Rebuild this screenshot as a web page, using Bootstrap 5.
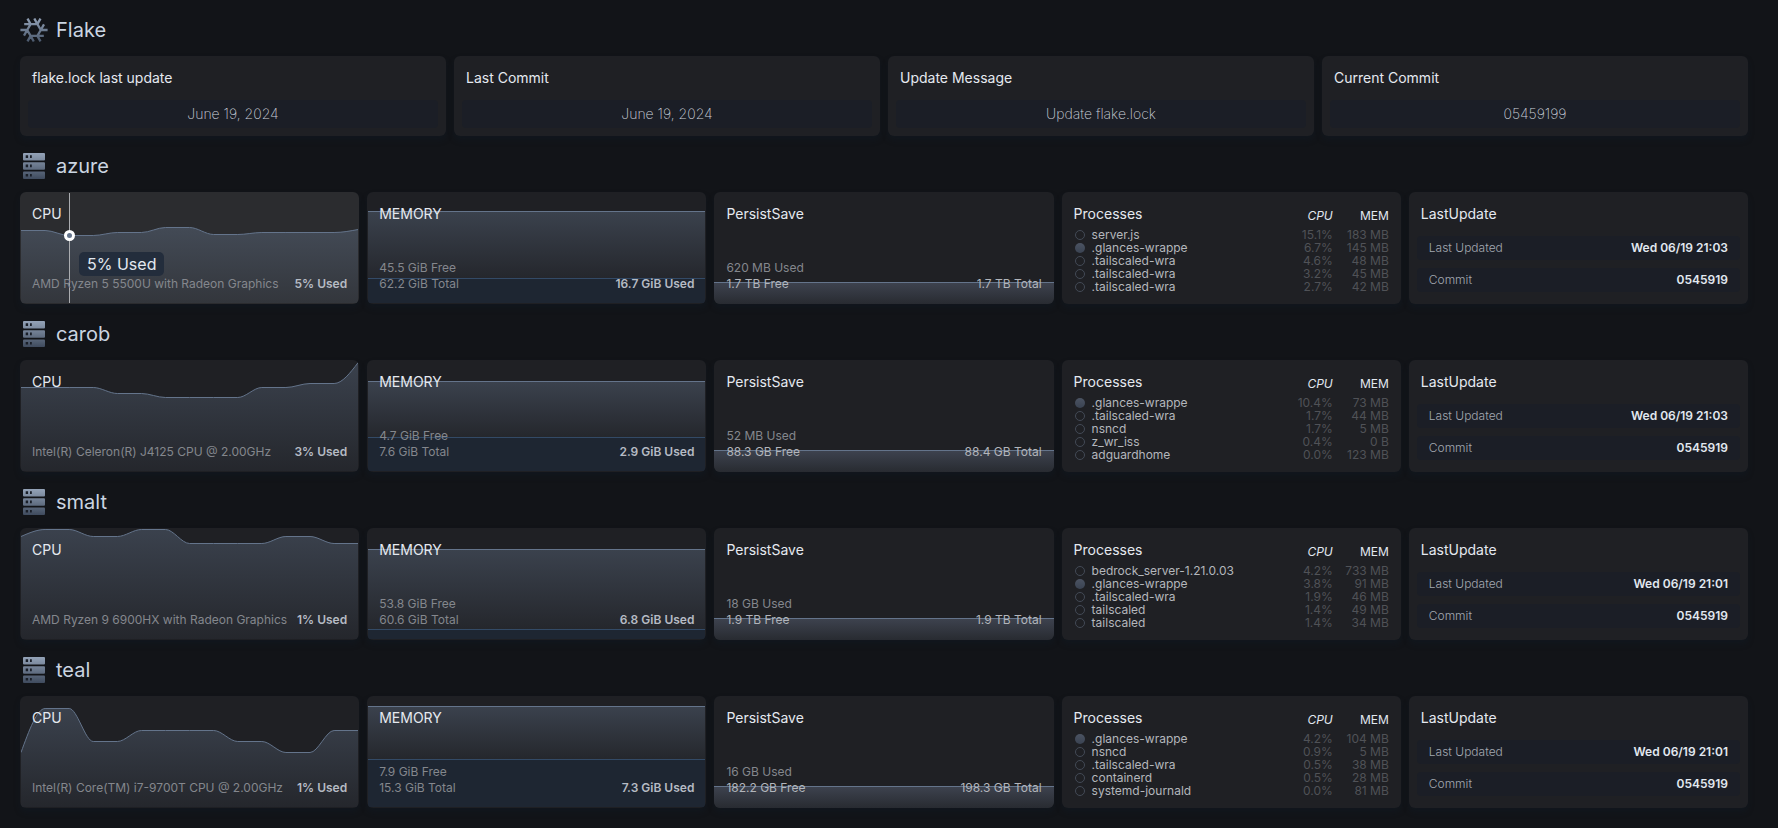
<!DOCTYPE html>
<html lang="en">
<head>
<meta charset="utf-8">
<meta name="viewport" content="width=device-width, initial-scale=1">
<title>Homelab</title>
<link href="https://cdn.jsdelivr.net/npm/bootstrap@5.3.0/dist/css/bootstrap.min.css" rel="stylesheet">
<style>
body{background:#121418;color:#e2e8f0;font-family:Inter,"Noto Sans",sans-serif;font-size:12px;line-height:16px}
.page{padding:0 30px 20px 20px}
.group-head{height:56px;padding-top:4px;gap:8px}
.group-head h2{font-size:20px;line-height:28px;font-weight:400;color:#cbd5e1}
.group-head svg{width:28px;height:28px}
.tiles{display:grid;gap:8px;grid-template-columns:repeat(auto-fit,minmax(300px,1fr))}
.tile{position:relative;background:#1f2024;border-radius:6px;overflow:hidden;box-shadow:0 4px 6px rgba(15,30,42,.3);min-width:0}
.tiles-host .tile{height:112px}
.tile h3{font-size:14px;line-height:20px;font-weight:400;margin:0;color:#e5e9f0}
.metric{display:flex;flex-direction:column;padding:12px}
.metric>*{position:relative}
.metric .chart{position:absolute;inset:1px;width:calc(100% - 2px);height:calc(100% - 2px)}
.chart path{vector-effect:non-scaling-stroke}
.chart .edge{fill:none;stroke:#64748b;stroke-width:1}
.chart .edge-used{fill:none;stroke:#334a66;stroke-width:1}
.metric .fill{position:absolute;left:0;right:0;bottom:0;background:linear-gradient(#3d424e,#282b31);border-top:1px solid #64748b}
.muted{color:#84878d}
.strong{color:#b6bbc4;font-weight:600}
.soft{color:#b2b5bb}
.hovered{background:#2b2c2f}
.probe{position:absolute!important;top:1px;bottom:1px;width:1px;background:#aaacb0}
.probe i{position:absolute;top:37px;left:-5px;width:11px;height:11px;border:3px solid #fff;border-radius:50%;background:#64748b}
.tip{position:absolute!important;z-index:2;top:60px;padding:0 8px;border-radius:5px;background:#232d3c;font-size:16px;line-height:24px;color:#e2e8f0}
.pill{background:#1b1e26;border-radius:4px;margin:0 8px}
.info{padding:12px 0 8px}
.info h3{padding:0 12px;margin-bottom:12px}
.pill-center{height:28px;line-height:28px;font-size:14px;font-weight:200;text-align:center;color:#cbd1da}
.pill-row{height:24px;line-height:24px;padding:0 12px;margin-bottom:8px}
.pill-row dt{font-weight:300;color:#a3a8b1}
.pill-row dd{font-weight:600;margin:0;color:#e2e8f0}
.procs{padding:12px}
.procs table{width:100%;border-collapse:collapse}
.procs thead tr{height:24px}
.procs th{font-weight:400;padding:0;vertical-align:top}
.procs thead th{line-height:23px;color:#e2e8f0;text-align:right}
.procs thead th:first-child{font-size:14px;line-height:20px;text-align:left;color:#e5e9f0}
.procs tbody th,.procs td{line-height:13px;height:13px;padding:0}
.procs tbody th{color:#b4b7bc}
.procs tbody th::before{content:"";display:inline-block;width:10px;height:10px;margin:0 7px 0 1px;border:1px solid #434a56;border-radius:50%;vertical-align:-1px}
.procs tbody th.run::before{border:0;background:linear-gradient(#4b5362,#3a4352)}
.procs td{width:56px;text-align:right;color:#505257}
.procs td:nth-child(2){width:72px}
</style>
</head>
<body>
<svg width="0" height="0" class="position-absolute" aria-hidden="true">
<defs>
<linearGradient id="slate" gradientUnits="userSpaceOnUse" x1="0" y1="1" x2="0" y2="27"><stop stop-color="#94a3b8"/><stop offset="1" stop-color="#3f4b5e"/></linearGradient>
<linearGradient id="flakeFill" gradientUnits="userSpaceOnUse" x1="0" y1="1" x2="0" y2="27"><stop stop-color="#94a3b8"/><stop offset="1" stop-color="#475569"/></linearGradient>
<linearGradient id="area" x2="0" y2="1"><stop stop-color="#64748b" stop-opacity=".4"/><stop offset="1" stop-color="#64748b" stop-opacity=".08"/></linearGradient>
<linearGradient id="areaHot" x2="0" y2="1"><stop stop-color="#64748b" stop-opacity=".42"/><stop offset="1" stop-color="#64748b" stop-opacity=".14"/></linearGradient>
<symbol id="server" viewBox="0 0 28 28">
<g fill="url(#slate)"><rect x="3" y="1" width="22" height="7.4" rx="1"/><rect x="3" y="10.3" width="22" height="7.4" rx="1"/><rect x="3" y="19.6" width="22" height="7.4" rx="1"/></g>
<path fill="#1a1f28" d="M5.7 3.3h2.4v2.6H5.7zM10 3.3h1.8v2.6H10zM5.7 12.6h2.4v2.6H5.7zM10 12.6h1.8v2.6H10zM5.7 21.9h2.4v2.6H5.7zM10 21.9h1.8v2.6H10z"/>
</symbol>
<symbol id="nix" viewBox="0 0 28 28">
<path fill="none" stroke="url(#flakeFill)" stroke-width="2.3" d="M10.6 8.1H17.4L20.8 14 17.4 19.9H10.6L7.2 14ZM17.4 8.1 20.5 2.6M17.4 8.1 14.3 2.5M20.8 14H27.6M20.8 14 24 8.4M17.4 19.9 20.5 25.4M17.4 19.9H23.8M10.6 19.9 7.5 25.4M10.6 19.9 13.8 25.5M7.2 14H.4M7.2 14 4 19.6M10.6 8.1 7.5 2.6M10.6 8.1H4.2"/>
</symbol>
</defs></svg>

<main class="container-fluid page">

<section>
<header class="group-head d-flex align-items-center"><svg aria-hidden="true"><use href="#nix"/></svg><h2 class="m-0">Flake</h2></header>
<div class="tiles">
<article class="tile info"><h3>flake.lock last update</h3><div class="pill pill-center">June 19, 2024</div></article>
<article class="tile info"><h3>Last Commit</h3><div class="pill pill-center">June 19, 2024</div></article>
<article class="tile info"><h3>Update Message</h3><div class="pill pill-center">Update flake.lock</div></article>
<article class="tile info"><h3>Current Commit</h3><div class="pill pill-center">05459199</div></article>
</div>
</section>

<section>
<header class="group-head d-flex align-items-center"><svg aria-hidden="true"><use href="#server"/></svg><h2 class="m-0">azure</h2></header>
<div class="tiles tiles-host">
<article class="tile metric hovered">
<svg class="chart" viewBox="0 0 336 110" preserveAspectRatio="none" data-fill="areaHot" data-points="37,37,42,42,39,39,34,34,41,41,39,39,39,39,36"></svg>
<div class="probe" style="left:14.4%"><i></i></div>
<h3>CPU</h3>
<div class="mt-auto d-flex justify-content-between"><span class="muted">AMD Ryzen 5 5500U with Radeon Graphics</span><span class="strong">5% Used</span></div>
<div class="tip" style="left:17.4%">5% Used</div>
</article>
<article class="tile metric">
<svg class="chart" viewBox="0 0 336 110" preserveAspectRatio="none" data-free="18" data-used="85"></svg>
<h3>MEMORY</h3>
<div class="mt-auto muted">45.5 GiB Free</div>
<div class="d-flex justify-content-between"><span class="muted">62.2 GiB Total</span><span class="strong">16.7 GiB Used</span></div>
</article>
<article class="tile metric">
<div class="fill" style="height:20%"></div>
<h3>PersistSave</h3>
<div class="mt-auto muted">620 MB Used</div>
<div class="d-flex justify-content-between soft"><span>1.7 TB Free</span><span>1.7 TB Total</span></div>
</article>
<article class="tile procs"><table>
<thead><tr><th scope="col">Processes</th><th scope="col"><em>CPU</em></th><th scope="col">MEM</th></tr></thead>
<tbody>
<tr><th scope="row">server.js</th><td>15.1%</td><td>183 MB</td></tr>
<tr><th scope="row" class="run">.glances-wrappe</th><td>6.7%</td><td>145 MB</td></tr>
<tr><th scope="row">.tailscaled-wra</th><td>4.6%</td><td>48 MB</td></tr>
<tr><th scope="row">.tailscaled-wra</th><td>3.2%</td><td>45 MB</td></tr>
<tr><th scope="row">.tailscaled-wra</th><td>2.7%</td><td>42 MB</td></tr>
</tbody></table></article>
<article class="tile info"><h3>LastUpdate</h3>
<dl class="m-0">
<div class="pill pill-row d-flex justify-content-between"><dt>Last Updated</dt><dd>Wed 06/19 21:03</dd></div>
<div class="pill pill-row d-flex justify-content-between"><dt>Commit</dt><dd>0545919</dd></div>
</dl></article>
</div>
</section>

<section>
<header class="group-head d-flex align-items-center"><svg aria-hidden="true"><use href="#server"/></svg><h2 class="m-0">carob</h2></header>
<div class="tiles tiles-host">
<article class="tile metric">
<svg class="chart" viewBox="0 0 336 110" preserveAspectRatio="none" data-fill="area" data-points="26,26,26,26,32,32,36,36,36,36,26,26,22,22,1"></svg>
<h3>CPU</h3>
<div class="mt-auto d-flex justify-content-between"><span class="muted">Intel(R) Celeron(R) J4125 CPU @ 2.00GHz</span><span class="strong">3% Used</span></div>
</article>
<article class="tile metric">
<svg class="chart" viewBox="0 0 336 110" preserveAspectRatio="none" data-free="20" data-used="76"></svg>
<h3>MEMORY</h3>
<div class="mt-auto muted">4.7 GiB Free</div>
<div class="d-flex justify-content-between"><span class="muted">7.6 GiB Total</span><span class="strong">2.9 GiB Used</span></div>
</article>
<article class="tile metric">
<div class="fill" style="height:20%"></div>
<h3>PersistSave</h3>
<div class="mt-auto muted">52 MB Used</div>
<div class="d-flex justify-content-between soft"><span>88.3 GB Free</span><span>88.4 GB Total</span></div>
</article>
<article class="tile procs"><table>
<thead><tr><th scope="col">Processes</th><th scope="col"><em>CPU</em></th><th scope="col">MEM</th></tr></thead>
<tbody>
<tr><th scope="row" class="run">.glances-wrappe</th><td>10.4%</td><td>73 MB</td></tr>
<tr><th scope="row">.tailscaled-wra</th><td>1.7%</td><td>44 MB</td></tr>
<tr><th scope="row">nsncd</th><td>1.7%</td><td>5 MB</td></tr>
<tr><th scope="row">z_wr_iss</th><td>0.4%</td><td>0 B</td></tr>
<tr><th scope="row">adguardhome</th><td>0.0%</td><td>123 MB</td></tr>
</tbody></table></article>
<article class="tile info"><h3>LastUpdate</h3>
<dl class="m-0">
<div class="pill pill-row d-flex justify-content-between"><dt>Last Updated</dt><dd>Wed 06/19 21:03</dd></div>
<div class="pill pill-row d-flex justify-content-between"><dt>Commit</dt><dd>0545919</dd></div>
</dl></article>
</div>
</section>

<section>
<header class="group-head d-flex align-items-center"><svg aria-hidden="true"><use href="#server"/></svg><h2 class="m-0">smalt</h2></header>
<div class="tiles tiles-host">
<article class="tile metric">
<svg class="chart" viewBox="0 0 336 110" preserveAspectRatio="none" data-fill="area" data-points="7,0,0,7,7,0,0,14,14,14,14,7,7,14,14"></svg>
<h3>CPU</h3>
<div class="mt-auto d-flex justify-content-between"><span class="muted">AMD Ryzen 9 6900HX with Radeon Graphics</span><span class="strong">1% Used</span></div>
</article>
<article class="tile metric">
<svg class="chart" viewBox="0 0 336 110" preserveAspectRatio="none" data-free="20" data-used="100"></svg>
<h3>MEMORY</h3>
<div class="mt-auto muted">53.8 GiB Free</div>
<div class="d-flex justify-content-between"><span class="muted">60.6 GiB Total</span><span class="strong">6.8 GiB Used</span></div>
</article>
<article class="tile metric">
<div class="fill" style="height:20%"></div>
<h3>PersistSave</h3>
<div class="mt-auto muted">18 GB Used</div>
<div class="d-flex justify-content-between soft"><span>1.9 TB Free</span><span>1.9 TB Total</span></div>
</article>
<article class="tile procs"><table>
<thead><tr><th scope="col">Processes</th><th scope="col"><em>CPU</em></th><th scope="col">MEM</th></tr></thead>
<tbody>
<tr><th scope="row">bedrock_server-1.21.0.03</th><td>4.2%</td><td>733 MB</td></tr>
<tr><th scope="row" class="run">.glances-wrappe</th><td>3.8%</td><td>91 MB</td></tr>
<tr><th scope="row">.tailscaled-wra</th><td>1.9%</td><td>46 MB</td></tr>
<tr><th scope="row">tailscaled</th><td>1.4%</td><td>49 MB</td></tr>
<tr><th scope="row">tailscaled</th><td>1.4%</td><td>34 MB</td></tr>
</tbody></table></article>
<article class="tile info"><h3>LastUpdate</h3>
<dl class="m-0">
<div class="pill pill-row d-flex justify-content-between"><dt>Last Updated</dt><dd>Wed 06/19 21:01</dd></div>
<div class="pill pill-row d-flex justify-content-between"><dt>Commit</dt><dd>0545919</dd></div>
</dl></article>
</div>
</section>

<section>
<header class="group-head d-flex align-items-center"><svg aria-hidden="true"><use href="#server"/></svg><h2 class="m-0">teal</h2></header>
<div class="tiles tiles-host">
<article class="tile metric">
<svg class="chart" viewBox="0 0 336 110" preserveAspectRatio="none" data-fill="area" data-points="55,11,11,44,44,33,33,33,33,44,44,55,55,33,33"></svg>
<h3>CPU</h3>
<div class="mt-auto d-flex justify-content-between"><span class="muted">Intel(R) Core(TM) i7-9700T CPU @ 2.00GHz</span><span class="strong">1% Used</span></div>
</article>
<article class="tile metric">
<svg class="chart" viewBox="0 0 336 110" preserveAspectRatio="none" data-free="9" data-used="62"></svg>
<h3>MEMORY</h3>
<div class="mt-auto muted">7.9 GiB Free</div>
<div class="d-flex justify-content-between"><span class="muted">15.3 GiB Total</span><span class="strong">7.3 GiB Used</span></div>
</article>
<article class="tile metric">
<div class="fill" style="height:20%"></div>
<h3>PersistSave</h3>
<div class="mt-auto muted">16 GB Used</div>
<div class="d-flex justify-content-between soft"><span>182.2 GB Free</span><span>198.3 GB Total</span></div>
</article>
<article class="tile procs"><table>
<thead><tr><th scope="col">Processes</th><th scope="col"><em>CPU</em></th><th scope="col">MEM</th></tr></thead>
<tbody>
<tr><th scope="row" class="run">.glances-wrappe</th><td>4.2%</td><td>104 MB</td></tr>
<tr><th scope="row">nsncd</th><td>0.9%</td><td>5 MB</td></tr>
<tr><th scope="row">.tailscaled-wra</th><td>0.5%</td><td>38 MB</td></tr>
<tr><th scope="row">containerd</th><td>0.5%</td><td>28 MB</td></tr>
<tr><th scope="row">systemd-journald</th><td>0.0%</td><td>81 MB</td></tr>
</tbody></table></article>
<article class="tile info"><h3>LastUpdate</h3>
<dl class="m-0">
<div class="pill pill-row d-flex justify-content-between"><dt>Last Updated</dt><dd>Wed 06/19 21:01</dd></div>
<div class="pill pill-row d-flex justify-content-between"><dt>Commit</dt><dd>0545919</dd></div>
</dl></article>
</div>
</section>
</main>

<script src="https://cdn.jsdelivr.net/npm/bootstrap@5.3.0/dist/js/bootstrap.bundle.min.js"></script>
<script>
// CPU history: smooth line through 15 samples, 24 units apart.
// A slope at either end of the history starts or ends without easing.
document.querySelectorAll('.chart[data-points]').forEach(svg => {
  const ys = svg.dataset.points.split(',').map(y => +y + 0.5), n = ys.length - 1;
  let d = `M0 ${ys[0]}`;
  for (let i = 1; i <= n; i++) {
    const a = ys[i - 1], b = ys[i], x = i * 24;
    const c1 = i === 1 ? a + (b - a) / 2 : a, c2 = i === n ? b - (b - a) / 2 : b;
    d += `C${x - 16} ${c1} ${x - 8} ${c2} ${x} ${b}`;
  }
  svg.innerHTML = `<path fill="url(#${svg.dataset.fill})" d="${d}V110H0Z"/><path class="edge" d="${d}"/>`;
});
// Memory: total on top, used part below.
document.querySelectorAll('.chart[data-free]').forEach(svg => {
  const f = +svg.dataset.free + 0.5, u = +svg.dataset.used + 0.5;
  svg.innerHTML = `<path fill="url(#area)" d="M0 ${f}H336V${u}H0Z"/><path fill="#1e2632" d="M0 ${u}H336V110H0Z"/>` +
    `<path class="edge" d="M0 ${f}H336"/><path class="edge-used" d="M0 ${u}H336"/>`;
});
</script>
</body>
</html>
